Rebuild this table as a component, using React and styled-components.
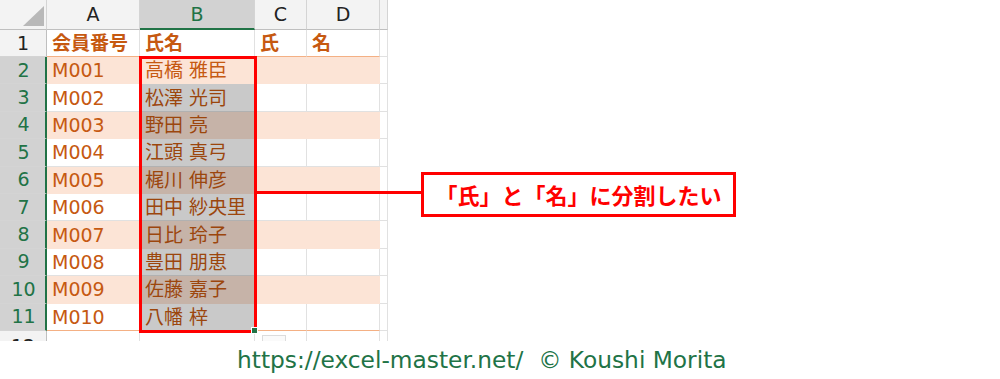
import React from 'react';
import styled, { createGlobalStyle, css } from 'styled-components';

const Global = createGlobalStyle`
  html, body { margin: 0; padding: 0; background: #ffffff; }
  body { font-family: "DejaVu Sans", "Noto Sans CJK JP", sans-serif; }
`;

const ORANGE = '#c65911';
const GREEN = '#217346';
const PINK = '#fce4d6';
const GRID = '#e1e1e1';

const Page = styled.div`
  width: 1000px;
  height: 379px;
  overflow: hidden;
  display: flex;
  flex-direction: column;
`;

const Top = styled.div`
  display: flex;
  align-items: flex-start;
  height: 341px;
`;

const SheetWrap = styled.div`
  position: relative;
  width: 388px;
  height: 341px;
  overflow: hidden;
`;

const Grid = styled.div`
  display: grid;
  grid-template-columns: 47px 93px 115px 52px 73px 8px;
  grid-template-rows: 30px 27px repeat(10, 27.4px) 20px;
`;

const Corner = styled.div`
  box-sizing: border-box;
  background: #f3f3f3;
  border-right: 1px solid #d4d4d4;
  border-bottom: 1px solid #bfbfbf;
  display: flex;
  align-items: flex-end;
  justify-content: flex-end;
  padding: 0 2px 3px 0;
`;

const ColHead = styled.div`
  box-sizing: border-box;
  background: ${(p) => (p.$sel ? '#d2d2d2' : '#f3f3f3')};
  color: ${(p) => (p.$sel ? GREEN : '#222')};
  border-right: 1px solid #d4d4d4;
  border-bottom: ${(p) => (p.$sel ? `2px solid ${GREEN}` : '1px solid #bfbfbf')};
  display: flex;
  align-items: center;
  justify-content: center;
  font-size: 19px;
  line-height: 1;
  padding-top: ${(p) => (p.$sel ? '1px' : '0')};
`;

const RowHead = styled.div`
  box-sizing: border-box;
  background: ${(p) => (p.$sel ? '#d2d2d2' : '#f3f3f3')};
  color: ${(p) => (p.$sel ? GREEN : '#222')};
  border-right: ${(p) => (p.$sel ? `2px solid ${GREEN}` : '1px solid #bfbfbf')};
  border-bottom: 1px solid #d4d4d4;
  display: flex;
  align-items: ${(p) => (p.$top ? 'flex-start' : 'center')};
  justify-content: center;
  font-size: 19px;
  line-height: 1;
  padding-top: ${(p) => (p.$top ? '6px' : '0')};
  padding-left: ${(p) => (p.$sel ? '2px' : '0')};
`;

const Cell = styled.div`
  position: relative;
  box-sizing: border-box;
  background: ${(p) => (p.$stripe ? PINK : '#ffffff')};
  border-right: 1px solid ${(p) => (p.$stripe ? PINK : GRID)};
  border-bottom: 1px solid ${(p) => (p.$line ? '#f4b084' : p.$stripe ? PINK : GRID)};
  color: ${ORANGE};
  font-size: 19px;
  font-weight: ${(p) => (p.$bold ? 700 : 400)};
  line-height: 1;
  white-space: nowrap;
  display: flex;
  align-items: center;
  padding: 1px 0 0 5px;
  ${(p) =>
    p.$shade &&
    css`
      &::after {
        content: '';
        position: absolute;
        inset: 0 0 -1px 0;
        background: rgba(0, 0, 0, 0.21);
      }
    `}
`;

const SelectBox = styled.div`
  position: absolute;
  left: 139px;
  top: 56px;
  width: 118px;
  height: 277px;
  box-sizing: border-box;
  border: 3px solid #ff0000;
  &::after {
    content: '';
    position: absolute;
    right: -4px;
    bottom: -4px;
    width: 5px;
    height: 5px;
    background: ${GREEN};
    border: 1px solid #fff;
  }
`;

const PasteTag = styled.div`
  position: absolute;
  left: 262px;
  top: 335px;
  width: 24px;
  height: 10px;
  box-sizing: border-box;
  border: 1px solid #dcdcdc;
  background: #fafafa;
`;

const Callout = styled.div`
  position: relative;
  margin: 172px 0 0 33px;
  width: 315px;
  height: 45px;
  box-sizing: border-box;
  border: 3px solid #ff0000;
  background: #ffffff;
  display: flex;
  align-items: center;
  justify-content: center;
  color: #ff0000;
  font-family: "Noto Sans CJK JP", sans-serif;
  font-weight: 700;
  font-size: 22px;
  line-height: 1;
  padding-bottom: 1px;
  &::before {
    content: '';
    position: absolute;
    right: 100%;
    top: 16px;
    width: 168px;
    height: 3px;
    background: #ff0000;
  }
`;

const Footer = styled.div`
  padding: 4px 0 0 237px;
  color: ${GREEN};
  font-family: "DejaVu Sans", sans-serif;
  font-size: 23.3px;
  line-height: 30px;
  white-space: pre;
`;

const data = [
  ['M001', '高橋 雅臣'],
  ['M002', '松澤 光司'],
  ['M003', '野田 亮'],
  ['M004', '江頭 真弓'],
  ['M005', '梶川 伸彦'],
  ['M006', '田中 紗央里'],
  ['M007', '日比 玲子'],
  ['M008', '豊田 朋恵'],
  ['M009', '佐藤 嘉子'],
  ['M010', '八幡 梓'],
];

export default function App() {
  return (
    <Page>
      <Global />
      <Top>
        <SheetWrap>
          <Grid>
            <Corner>
              <svg width="21" height="20" viewBox="0 0 21 20">
                <polygon points="21,0 21,20 0,20" fill="#b8b8b8" />
              </svg>
            </Corner>
            <ColHead>A</ColHead>
            <ColHead $sel>B</ColHead>
            <ColHead>C</ColHead>
            <ColHead>D</ColHead>
            <ColHead />

            <RowHead>1</RowHead>
            <Cell $bold $line>会員番号</Cell>
            <Cell $bold $line>氏名</Cell>
            <Cell $bold $line>氏</Cell>
            <Cell $bold $line>名</Cell>
            <Cell />

            {data.map(([id, name], i) => {
              const stripe = i % 2 === 0;
              const last = i === data.length - 1;
              return (
                <React.Fragment key={id}>
                  <RowHead $sel>{i + 2}</RowHead>
                  <Cell $stripe={stripe} $line={last}>{id}</Cell>
                  <Cell $stripe={stripe} $line={last} $shade={i > 0}>{name}</Cell>
                  <Cell $stripe={stripe} $line={last} />
                  <Cell $stripe={stripe} $line={last} />
                  <Cell />
                </React.Fragment>
              );
            })}

            <RowHead $top>12</RowHead>
            <Cell />
            <Cell />
            <Cell />
            <Cell />
            <Cell />
          </Grid>
          <SelectBox />
          <PasteTag />
        </SheetWrap>
        <Callout>「氏」と「名」に分割したい</Callout>
      </Top>
      <Footer>https://excel-master.net/  © Koushi Morita</Footer>
    </Page>
  );
}
